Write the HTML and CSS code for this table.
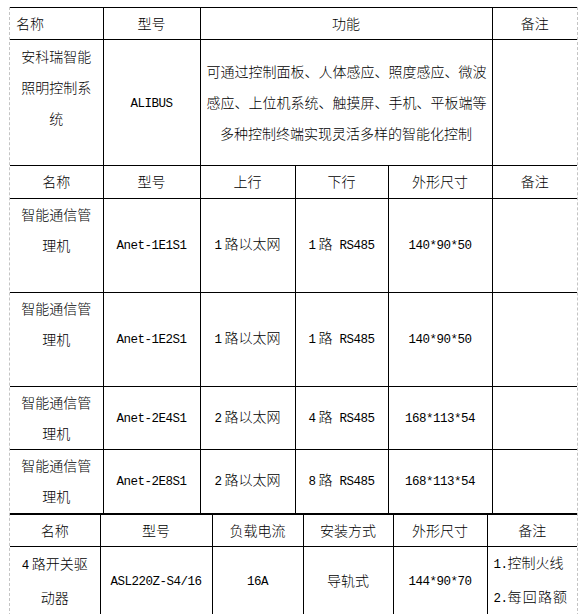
FILE: index.html
```html
<!DOCTYPE html>
<html lang="zh-CN">
<head>
<meta charset="utf-8">
<title>安科瑞智能照明控制系统</title>
<link rel="stylesheet" href="styles.css">
</head>
<body>
<div class="page">
  <table class="spec spec-system">
    <colgroup>
      <col class="w93"><col class="w97"><col class="w292"><col class="w85">
    </colgroup>
    <tr class="row-head">
      <th class="left">名称</th><th>型号</th><th>功能</th><th>备注</th>
    </tr>
    <tr class="row-126">
      <td class="trail">安科瑞智能<br>照明控制系<br>统</td>
      <td><span class="en">ALIBUS</span></td>
      <td>可通过控制面板、人体感应、照度感应、微波<br>感应、上位机系统、触摸屏、手机、平板端等<br>多种控制终端实现灵活多样的智能化控制</td>
      <td></td>
    </tr>
  </table>

  <table class="spec spec-gateway">
    <colgroup>
      <col class="w93"><col class="w97"><col class="w95"><col class="w93"><col class="w104"><col class="w85">
    </colgroup>
    <tr class="row-head">
      <th>名称</th><th>型号</th><th>上行</th><th>下行</th><th>外形尺寸</th><th>备注</th>
    </tr>
    <tr class="row-94">
      <td class="trail">智能通信管<br>理机</td>
      <td><span class="en">Anet-1E1S1</span></td>
      <td><span class="en num">1</span>路以太网</td>
      <td><span class="en num">1</span>路<span class="en"> RS485</span></td>
      <td><span class="en">140*90*50</span></td>
      <td></td>
    </tr>
    <tr class="row-94">
      <td class="trail">智能通信管<br>理机</td>
      <td><span class="en">Anet-1E2S1</span></td>
      <td><span class="en num">1</span>路以太网</td>
      <td><span class="en num">1</span>路<span class="en"> RS485</span></td>
      <td><span class="en">140*90*50</span></td>
      <td></td>
    </tr>
    <tr class="row-63">
      <td>智能通信管<br>理机</td>
      <td><span class="en">Anet-2E4S1</span></td>
      <td><span class="en num">2</span>路以太网</td>
      <td><span class="en num">4</span>路<span class="en"> RS485</span></td>
      <td><span class="en">168*113*54</span></td>
      <td></td>
    </tr>
    <tr class="row-64">
      <td>智能通信管<br>理机</td>
      <td><span class="en">Anet-2E8S1</span></td>
      <td><span class="en num">2</span>路以太网</td>
      <td><span class="en num">8</span>路<span class="en"> RS485</span></td>
      <td><span class="en">168*113*54</span></td>
      <td></td>
    </tr>
  </table>

  <table class="spec spec-driver">
    <colgroup>
      <col class="w90"><col class="w112"><col class="w91"><col class="w90"><col class="w94"><col class="w90">
    </colgroup>
    <tr class="row-head-31">
      <th>名称</th><th>型号</th><th>负载电流</th><th>安装方式</th><th>外形尺寸</th><th>备注</th>
    </tr>
    <tr class="row-63 tight">
      <td><span class="en num">4</span>路开关驱<br>动器</td>
      <td><span class="en">ASL220Z-S4/16</span></td>
      <td><span class="en">16A</span></td>
      <td>导轨式</td>
      <td><span class="en">144*90*70</span></td>
      <td class="notes"><span class="en">1.</span>控制火线<br><span class="spread"><span class="en">2.</span>每回路额</span></td>
    </tr>
  </table>
</div>
</body>
</html>
```

FILE: styles.css
```css
html, body {
  margin: 0;
  padding: 0;
  background: #ffffff;
}

body {
  font-family: "Noto Sans CJK SC", "Noto Sans", sans-serif;
  font-size: 14px;
  font-weight: 300;
  color: #000000;
}

.page {
  margin: 7px 0 0 9px;
  width: 567px;
  border-left: 1px dashed #c4c4c4;
  border-right: 1px dashed #c4c4c4;
}

.spec {
  width: 567px;
  border-collapse: collapse;
  table-layout: fixed;
}

.spec th,
.spec td {
  border: 1px solid #000000;
  padding: 0 6px;
  text-align: center;
  vertical-align: middle;
  line-height: 31px;
  font-weight: 300;
  overflow: hidden;
  white-space: nowrap;
}

.spec tr > :first-child { border-left: none; }
.spec tr > :last-child { border-right: none; }

.spec-gateway tr:first-child > * { border-top: none; }

.spec th.left { text-align: left; }

.w85 { width: 85px; }
.w90 { width: 90px; }
.w91 { width: 91px; }
.w93 { width: 93px; }
.w94 { width: 94px; }
.w95 { width: 95px; }
.w97 { width: 97px; }
.w104 { width: 104px; }
.w112 { width: 112px; }
.w292 { width: 292px; }

.row-head { height: 32px; }
.row-head-31 { height: 31px; }
.row-126 { height: 126px; }
.row-94 { height: 94px; }
.row-63 { height: 63px; }
.row-64 { height: 64px; }

.spec td.trail { padding-bottom: 31px; }

.tight > * { line-height: 29px; }

.spec td.notes {
  text-align: left;
  padding-left: 6px;
  padding-right: 0;
}

.spread { letter-spacing: 1.2px; }

.en {
  font-family: "Liberation Mono", "DejaVu Sans Mono", monospace;
  font-size: 12.5px;
  font-weight: 400;
  letter-spacing: -0.5px;
}

.num { margin-right: 3px; }
```
